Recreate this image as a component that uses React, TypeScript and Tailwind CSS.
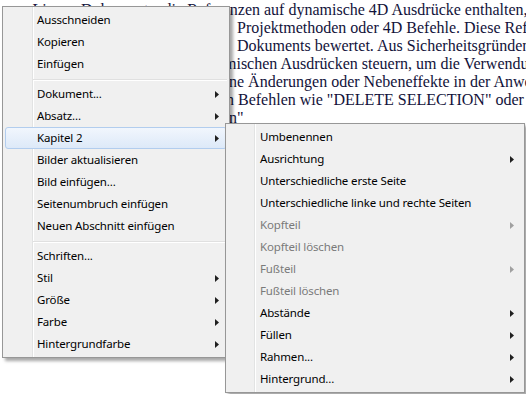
const docLines: { w: string; pr: string; hidden: string; shown: string }[] = [
  { w: 'w-[264px]', pr: 'pr-[4px]', hidden: 'Liegen Dokumente, die Referenzen', shown: 'auf dynamische 4D Ausdrücke enthalten, diese' },
  { w: 'w-[237px]', pr: 'pr-[10px]', hidden: 'wie Methoden,', shown: 'Projektmethoden oder 4D Befehle. Diese Referenzen' },
  { w: 'w-[237px]', pr: 'pr-[10px]', hidden: 'beim Öffnen des', shown: 'Dokuments bewertet. Aus Sicherheitsgründen' },
  { w: 'w-[224px]', pr: 'pr-0', hidden: 'Auswertung von dyna', shown: 'mischen Ausdrücken steuern, um die Verwendung' },
  { w: 'w-[237px]', pr: 'pr-0', hidden: 'sicherzustellen, dass kein', shown: 'e Änderungen oder Nebeneffekte in der Anwendung' },
  { w: 'w-[238px]', pr: 'pr-[4px]', hidden: 'Ausführung von', shown: 'Befehlen wie "DELETE SELECTION" oder' },
  { w: 'w-[237px]', pr: 'pr-0', hidden: 'verwendet werden', shown: '"' },
];

type Item = { label: string; sub?: boolean; disabled?: boolean; active?: boolean } | 'sep';

const mainItems: Item[] = [
  { label: 'Ausschneiden' },
  { label: 'Kopieren' },
  { label: 'Einfügen' },
  'sep',
  { label: 'Dokument...', sub: true },
  { label: 'Absatz...', sub: true },
  { label: 'Kapitel 2', sub: true, active: true },
  { label: 'Bilder aktualisieren' },
  { label: 'Bild einfügen...' },
  { label: 'Seitenumbruch einfügen' },
  { label: 'Neuen Abschnitt einfügen' },
  'sep',
  { label: 'Schriften...' },
  { label: 'Stil', sub: true },
  { label: 'Größe', sub: true },
  { label: 'Farbe', sub: true },
  { label: 'Hintergrundfarbe', sub: true },
];

const subItems: Item[] = [
  { label: 'Umbenennen' },
  { label: 'Ausrichtung', sub: true },
  { label: 'Unterschiedliche erste Seite' },
  { label: 'Unterschiedliche linke und rechte Seiten' },
  { label: 'Kopfteil', sub: true, disabled: true },
  { label: 'Kopfteil löschen', disabled: true },
  { label: 'Fußteil', sub: true, disabled: true },
  { label: 'Fußteil löschen', disabled: true },
  { label: 'Abstände', sub: true },
  { label: 'Füllen', sub: true },
  { label: 'Rahmen...', sub: true },
  { label: 'Hintergrund...', sub: true },
];

const Arrow = ({ disabled }: { disabled?: boolean }) => (
  <svg width="4" height="7" viewBox="0 0 4 7" className="shrink-0">
    <polygon points="0,0 4,3.5 0,7" fill={disabled ? '#a0a0a0' : '#202020'} />
  </svg>
);

const MenuList = ({ items }: { items: Item[] }) => (
  <>
    {items.map((it, i) =>
      it === 'sep' ? (
        <div key={i} className="h-[8px] pt-[4px] pl-[28px]">
          <div className="h-px bg-[#e0e0e0]" />
          <div className="h-px bg-white" />
        </div>
      ) : (
        <div
          key={i}
          className={
            'flex h-[22px] items-center justify-between rounded-[3px] border pl-[31px] pr-[7px] ' +
            (it.active
              ? 'border-[#b2cdee] bg-gradient-to-b from-[#f1f6fd] to-[#dde9f8]'
              : 'border-transparent')
          }
        >
          <span className={it.disabled ? 'text-[#7a7a7a]' : 'text-black'}>{it.label}</span>
          {it.sub && <Arrow disabled={it.disabled} />}
        </div>
      )
    )}
  </>
);

export default function App() {
  return (
    <div className="relative h-[394px] w-[526px] overflow-hidden bg-white">
      <div className="pt-[1px] font-['Liberation_Serif',serif] text-[16px] leading-[18px] text-[#12123a]">
        {docLines.map((l, i) => (
          <div key={i} className="flex whitespace-nowrap">
            <span className={`${l.w} ${l.pr} shrink-0 text-right`}>{l.hidden}</span>
            <span>{l.shown}</span>
          </div>
        ))}
      </div>

      <div className="absolute left-[2px] top-[6px] w-[228px] border border-[#979797] bg-[#f0f0f0] bg-[linear-gradient(to_right,transparent_29px,#e2e3e3_29px,#e2e3e3_30px,#ffffff_30px,#ffffff_31px,transparent_31px)] p-[2px] font-['Noto_Sans',sans-serif] text-[11.5px] tracking-[-0.15px] shadow-[3px_3px_3px_rgba(0,0,0,0.35)]">
        <MenuList items={mainItems} />
      </div>

      <div className="absolute left-[225px] top-[123px] w-[300px] border border-[#979797] bg-[#f0f0f0] bg-[linear-gradient(to_right,transparent_28px,#e2e3e3_28px,#e2e3e3_29px,#ffffff_29px,#ffffff_30px,transparent_30px)] p-[2px] font-['Noto_Sans',sans-serif] text-[11.5px] tracking-[-0.15px] shadow-[3px_3px_3px_rgba(0,0,0,0.35)]">
        <MenuList items={subItems} />
      </div>
    </div>
  );
}
